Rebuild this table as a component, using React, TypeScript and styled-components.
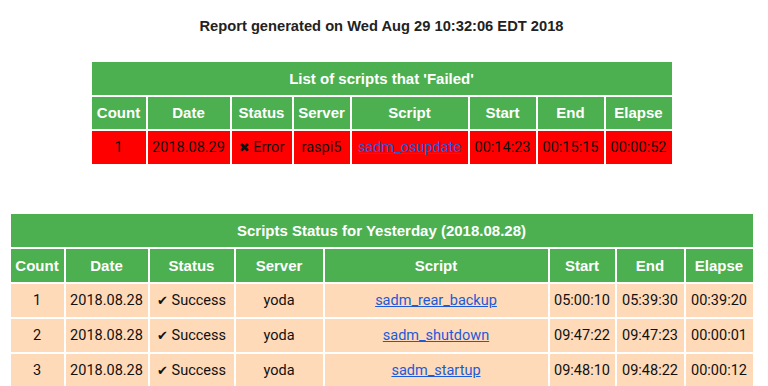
import React from 'react';
import styled, { createGlobalStyle } from 'styled-components';

type Run = {
  count: number;
  date: string;
  ok: boolean;
  server: string;
  script: string;
  start: string;
  end: string;
  elapse: string;
};

const failed: Run[] = [
  { count: 1, date: '2018.08.29', ok: false, server: 'raspi5', script: 'sadm_osupdate', start: '00:14:23', end: '00:15:15', elapse: '00:00:52' },
];

const yesterday: Run[] = [
  { count: 1, date: '2018.08.28', ok: true, server: 'yoda', script: 'sadm_rear_backup', start: '05:00:10', end: '05:39:30', elapse: '00:39:20' },
  { count: 2, date: '2018.08.28', ok: true, server: 'yoda', script: 'sadm_shutdown', start: '09:47:22', end: '09:47:23', elapse: '00:00:01' },
  { count: 3, date: '2018.08.28', ok: true, server: 'yoda', script: 'sadm_startup', start: '09:48:10', end: '09:48:22', elapse: '00:00:12' },
];

const headers = ['Count', 'Date', 'Status', 'Server', 'Script', 'Start', 'End', 'Elapse'];

const GlobalStyle = createGlobalStyle`
  html, body {
    margin: 0;
    padding: 0;
    background: #ffffff;
  }
  body {
    font-family: "Liberation Sans", Arial, sans-serif;
  }
`;

const ReportTable = ({ title, rows, widths, tone, rowHeight }: {
  title: string;
  rows: Run[];
  widths: number[];
  tone: 'failed' | 'ok';
  rowHeight: number;
}) => (
  <Table>
    <colgroup>
      {widths.map((w, i) => <Col key={i} $w={w} />)}
    </colgroup>
    <thead>
      <tr>
        <Caption colSpan={8} $h={rowHeight}>{title}</Caption>
      </tr>
      <tr>
        {headers.map(h => <HeadCell key={h} $h={rowHeight}>{h}</HeadCell>)}
      </tr>
    </thead>
    <tbody>
      {rows.map(r => (
        <tr key={r.count}>
          <DataCell $tone={tone} $h={rowHeight}>{r.count}</DataCell>
          <DataCell $tone={tone} $h={rowHeight}>{r.date}</DataCell>
          <DataCell $tone={tone} $h={rowHeight}>
            <Mark>{r.ok ? '✔' : '✖'}</Mark> {r.ok ? 'Success' : 'Error'}
          </DataCell>
          <DataCell $tone={tone} $h={rowHeight}>{r.server}</DataCell>
          <DataCell $tone={tone} $h={rowHeight}>
            <ScriptLink href="#">{r.script}</ScriptLink>
          </DataCell>
          <DataCell $tone={tone} $h={rowHeight}>{r.start}</DataCell>
          <DataCell $tone={tone} $h={rowHeight}>{r.end}</DataCell>
          <DataCell $tone={tone} $h={rowHeight}>{r.elapse}</DataCell>
        </tr>
      ))}
    </tbody>
  </Table>
);

const App = () => (
  <Page>
    <GlobalStyle />
    <ReportTitle>Report generated on Wed Aug 29 10:32:06 EDT 2018</ReportTitle>
    <Section $gap={24}>
      <ReportTable
        title="List of scripts that 'Failed'"
        rows={failed}
        widths={[54, 82, 60, 56, 116, 66, 66, 66]}
        tone="failed"
        rowHeight={32.5}
      />
    </Section>
    <Section $gap={46}>
      <ReportTable
        title="Scripts Status for Yesterday (2018.08.28)"
        rows={yesterday}
        widths={[53, 82, 84, 87, 223, 65, 67, 67]}
        tone="ok"
        rowHeight={33}
      />
    </Section>
  </Page>
);
export default App;

const Page = styled.div`
  width: 763px;
  height: 386px;
  overflow: hidden;
  display: flex;
  flex-direction: column;
  align-items: center;
`;

const ReportTitle = styled.h1`
  margin: 16px 0 0;
  font-size: 14.7px;
  line-height: 20px;
  font-weight: bold;
  color: #222222;
`;

const Section = styled.div<{ $gap: number }>`
  margin-top: ${p => p.$gap}px;
  display: flex;
  justify-content: center;
`;

const Table = styled.table`
  border-collapse: separate;
  border-spacing: 2px;
  table-layout: fixed;
`;

const Col = styled.col<{ $w: number }>`
  width: ${p => p.$w}px;
`;

const Caption = styled.th<{ $h: number }>`
  height: ${p => p.$h}px;
  padding: 0;
  background: #4caf50;
  color: #ffffff;
  font-size: 15px;
  font-weight: bold;
  text-align: center;
`;

const HeadCell = styled.th<{ $h: number }>`
  height: ${p => p.$h}px;
  padding: 0;
  background: #4caf50;
  color: #ffffff;
  font-size: 15px;
  font-weight: bold;
  text-align: center;
  white-space: nowrap;
`;

const DataCell = styled.td<{ $tone: 'failed' | 'ok'; $h: number }>`
  height: ${p => p.$h}px;
  padding: 0;
  background: ${p => (p.$tone === 'failed' ? '#ff0000' : '#ffdab9')};
  color: #111111;
  font-family: Roboto, "Liberation Sans", sans-serif;
  font-size: 14.5px;
  text-align: center;
  white-space: nowrap;
`;

const Mark = styled.span`
  font-family: "DejaVu Sans", sans-serif;
  font-size: 13px;
`;

const ScriptLink = styled.a`
  color: #1d5ad8;
  text-decoration: underline;
`;
